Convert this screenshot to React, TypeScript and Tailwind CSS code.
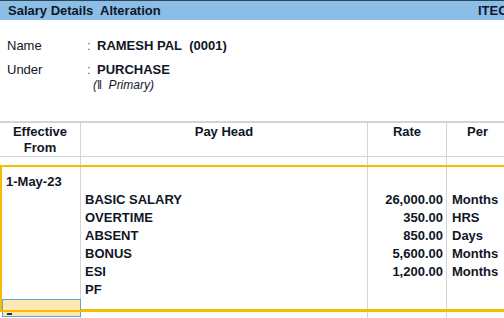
const payHeads = [
  { name: 'BASIC SALARY', rate: '26,000.00', per: 'Months' },
  { name: 'OVERTIME', rate: '350.00', per: 'HRS' },
  { name: 'ABSENT', rate: '850.00', per: 'Days' },
  { name: 'BONUS', rate: '5,600.00', per: 'Months' },
  { name: 'ESI', rate: '1,200.00', per: 'Months' },
  { name: 'PF', rate: '', per: '' },
];

export default function App() {
  return (
    <div className="relative w-[504px] h-[318px] overflow-hidden bg-white text-[#0f1626] text-[13px] font-['Liberation_Sans',Arial,sans-serif]">
      <div className="w-[508px]">
        {/* Title bar */}
        <div className="h-px bg-[#2b4656]" />
        <div className="h-[19px] bg-[#8bbde6] flex items-center justify-between pl-2 font-bold text-[13px]">
          <span>Salary Details&nbsp; Alteration</span>
          <span className="w-[30px] overflow-hidden whitespace-nowrap">ITEC</span>
        </div>

        {/* Employee info */}
        <div className="pt-[14px] pl-[7px] leading-[18px]">
          <div className="flex h-[24px] items-center">
            <span className="w-[80px]">Name</span>
            <span className="w-[10px] text-[#555]">:</span>
            <span className="font-bold">RAMESH PAL&nbsp; (0001)</span>
          </div>
          <div className="flex h-[24px] items-center">
            <span className="w-[80px]">Under</span>
            <span className="w-[10px] text-[#555]">:</span>
            <span className="font-bold">PURCHASE</span>
          </div>
          <div className="pl-[86px] -mt-[6px] italic text-[12px]">(‖&nbsp; Primary)</div>
        </div>

        {/* Table header */}
        <div className="mt-[27px] border-t-2 border-[#d4d4d4] grid grid-cols-[81px_287px_79px_61px] font-bold">
          <div className="h-[33px] border-r border-[#d4d4d4] flex flex-col items-center justify-center leading-[16px]">
            <span>Effective</span>
            <span>From</span>
          </div>
          <div className="border-r border-[#d4d4d4] text-center pt-[1px] leading-[16px]">Pay Head</div>
          <div className="border-r border-[#d4d4d4] text-center pt-[1px] leading-[16px]">Rate</div>
          <div className="text-center pt-[1px] leading-[16px]">Per</div>
        </div>
        <div className="grid grid-cols-[81px_287px_79px_61px] border-t border-[#d4d4d4] h-[9px]">
          <div className="border-r border-[#d4d4d4]" />
          <div className="border-r border-[#d4d4d4]" />
          <div className="border-r border-[#d4d4d4]" />
          <div />
        </div>

        {/* Selected entry */}
        <div className="border-y-2 border-l-2 border-[#f7bb00] grid grid-cols-[79px_287px_79px_61px] font-bold leading-[18px]">
          <div className="border-r border-[#d4d4d4] pt-[6px] pl-[4px]">1-May-23</div>
          <div className="border-r border-[#d4d4d4] pt-[24px] pb-[10px] pl-[4px]">
            {payHeads.map((p) => (
              <div key={p.name}>{p.name}</div>
            ))}
          </div>
          <div className="border-r border-[#d4d4d4] pt-[24px] pr-[3px] text-right">
            {payHeads.map((p) => (
              <div key={p.name} className="h-[18px]">{p.rate}</div>
            ))}
          </div>
          <div className="pt-[24px] pl-[5px]">
            {payHeads.map((p) => (
              <div key={p.name} className="h-[18px]">{p.per}</div>
            ))}
          </div>
        </div>
        <div className="grid grid-cols-[81px_287px_79px_61px] h-[10px]">
          <div className="border-r border-[#d4d4d4]" />
          <div className="border-r border-[#d4d4d4]" />
          <div className="border-r border-[#d4d4d4]" />
          <div />
        </div>
      </div>

      {/* Focused date input */}
      <div className="absolute left-[2px] top-[299px] w-[79px] h-[18px] border border-[#5aa7d6] bg-[#fde7b3]">
        <div className="absolute left-[4px] top-[13px] w-[5px] h-[2px] bg-[#1b2a4a]" />
      </div>
      <div className="absolute left-0 top-[310px] w-[504px] h-[2px] bg-[#f7bb00]" />
    </div>
  );
}
